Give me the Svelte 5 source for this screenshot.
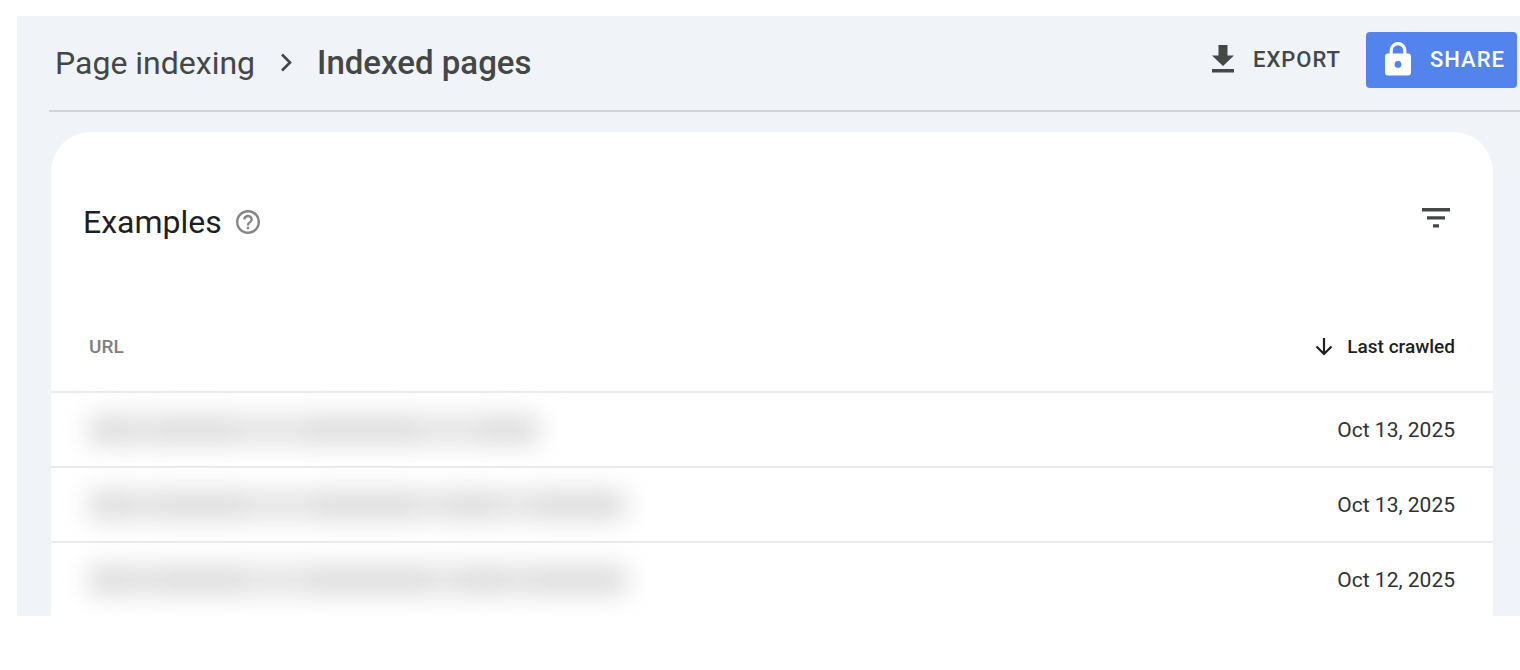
<script>
  const rows = [
    { date: 'Oct 13, 2025', redacted: [45, 20, 80, 72, 110, 65, 57] },
    { date: 'Oct 13, 2025', redacted: [48, 18, 90, 70, 100, 30, 50, 40, 90] },
    { date: 'Oct 12, 2025', redacted: [46, 18, 90, 66, 120, 30, 50, 20, 97] },
  ];
</script>

<main class="page">
  <header class="topbar">
    <nav class="crumbs" aria-label="Breadcrumb">
      <a href="#indexing">Page indexing</a>
      <svg class="chevron" viewBox="0 0 12 20" aria-hidden="true">
        <path d="M2 1.500l8 8-8 8" fill="none" stroke="currentColor" stroke-width="2.600" />
      </svg>
      <h1>Indexed pages</h1>
    </nav>
    <div class="actions">
      <button class="action" type="button">
        <svg class="download" viewBox="0 0 22 28" aria-hidden="true">
          <path d="M6.500 0h9v10.500H22L11 21 0 10.500h6.500zM0 24h22v3.500H0z" fill="currentColor" />
        </svg>
        <span>Export</span>
      </button>
      <button class="action share" type="button">
        <svg class="lock" viewBox="0 0 26 34" aria-hidden="true">
          <path d="M6.200 13V8.500a6.800 6.800 0 0 1 13.600 0V13" fill="none" stroke="currentColor" stroke-width="3.200" />
          <path fill-rule="evenodd" d="M3 11.500h20a3 3 0 0 1 3 3v16a3 3 0 0 1-3 3H3a3 3 0 0 1-3-3v-16a3 3 0 0 1 3-3zM13 19a3.400 3.400 0 1 0 0 6.800a3.400 3.400 0 0 0 0-6.800z" fill="currentColor" />
        </svg>
        <span>Share</span>
      </button>
    </div>
  </header>

  <section class="card">
    <div class="card-head">
      <div class="title">
        <h2>Examples</h2>
        <button class="icon-button" type="button" aria-label="Help">
          <svg class="help" viewBox="2 2 20 20" aria-hidden="true">
            <path fill="currentColor" d="M11 18h2v-2h-2v2zm1-16C6.480 2 2 6.480 2 12s4.480 10 10 10 10-4.480 10-10S17.520 2 12 2zm0 18c-4.410 0-8-3.590-8-8s3.590-8 8-8 8 3.590 8 8-3.590 8-8 8zm0-14c-2.210 0-4 1.790-4 4h2c0-1.100.9-2 2-2s2 .9 2 2c0 2-3 1.750-3 5h2c0-2.250 3-2.500 3-5 0-2.210-1.790-4-4-4z" />
          </svg>
        </button>
      </div>
      <button class="icon-button" type="button" aria-label="Filter">
        <svg class="filter" viewBox="0 0 28 20" aria-hidden="true">
          <path d="M0 0h28v3.500H0zM5 8.200h18v3.200H5zM11 16.200h6v3.200h-6z" fill="currentColor" />
        </svg>
      </button>
    </div>

    <table>
      <thead>
        <tr>
          <th class="url" scope="col">URL</th>
          <th class="crawled" scope="col" aria-sort="descending">
            <button class="sort" type="button">
              <svg class="arrow" viewBox="0 0 18 18" aria-hidden="true">
                <path d="M9 0v16M1.500 8.500L9 16l7.500-7.500" fill="none" stroke="currentColor" stroke-width="2.200" />
              </svg>
              <span>Last crawled</span>
            </button>
          </th>
        </tr>
      </thead>
      <tbody>
        {#each rows as row}
          <tr>
            <td>
              <div class="redacted">
                {#each row.redacted as width, i}
                  <span class:light={i % 2 === 1} style:width="{width}px"></span>
                {/each}
              </div>
            </td>
            <td class="date">{row.date}</td>
          </tr>
        {/each}
      </tbody>
    </table>
  </section>
</main>

<style>
  :global(body) {
    background: #fff;
    font-family: Roboto, "Liberation Sans", sans-serif;
  }
  .page {
    box-sizing: border-box;
    margin: 16px 0 0 17px;
    padding-left: 32px;
    background: #f0f3f8;
    color: #444746;
  }
  button {
    padding: 0;
    border: 0;
    background: none;
    color: inherit;
    font: inherit;
    cursor: pointer;
  }
  svg {
    display: block;
    flex: none;
  }
  h1, h2 {
    margin: 0;
  }
  .topbar {
    display: flex;
    align-items: center;
    justify-content: space-between;
    height: 94px;
    border-bottom: 2px solid #cfd1d4;
  }
  .crumbs {
    display: flex;
    align-items: center;
    gap: 25px;
    padding-left: 6px;
    font-size: 32px;
    line-height: 38px;
  }
  .crumbs a {
    color: inherit;
    text-decoration: none;
  }
  h1 {
    font-size: 33px;
    font-weight: 500;
  }
  .chevron {
    width: 12px;
    height: 20px;
  }
  .actions {
    display: flex;
    align-items: center;
    gap: 25px;
    padding: 0 3px 6px 0;
  }
  .action {
    display: flex;
    align-items: center;
    gap: 19px;
    font-size: 22px;
    font-weight: 500;
    line-height: 56px;
    letter-spacing: 1px;
    text-transform: uppercase;
  }
  .action svg {
    margin-bottom: 3px;
  }
  .share {
    padding: 0 12px 0 19px;
    border-radius: 4px;
    background: #5383ec;
    color: #fff;
  }
  .download {
    width: 22px;
    height: 28px;
  }
  .lock {
    width: 26px;
    height: 34px;
  }
  .card {
    margin: 20px 27px 0 2px;
    border-radius: 40px 40px 0 0;
    background: #fff;
    overflow: hidden;
  }
  .card-head {
    display: flex;
    align-items: flex-start;
    justify-content: space-between;
    padding: 70px 43px 58px 32px;
  }
  .title {
    display: flex;
    align-items: center;
    gap: 14px;
  }
  h2 {
    color: #1f1f1f;
    font-size: 32px;
    font-weight: 400;
    line-height: 40px;
  }
  .icon-button {
    padding: 6px 0;
  }
  .help {
    width: 24px;
    height: 24px;
    color: #858585;
  }
  .filter {
    width: 28px;
    height: 20px;
  }
  table {
    width: 100%;
    border-collapse: collapse;
  }
  th {
    height: 89px;
    padding: 2px 38px 0;
    font-size: 19px;
    font-weight: 500;
    text-align: left;
  }
  .url {
    color: #808080;
  }
  .crawled {
    color: #1f1f1f;
  }
  .sort {
    display: flex;
    align-items: center;
    gap: 14px;
    margin-left: auto;
  }
  .arrow {
    width: 18px;
    height: 18px;
  }
  td {
    height: 73px;
    padding: 0 38px;
    border-top: 2px solid #ebebeb;
  }
  .date {
    color: #303134;
    font-size: 21px;
    text-align: right;
    white-space: nowrap;
  }
  .redacted {
    display: flex;
    filter: blur(13px);
  }
  .redacted span {
    height: 28px;
    background: #dadada;
  }
  .redacted .light {
    background: #e2e2e2;
  }
</style>
